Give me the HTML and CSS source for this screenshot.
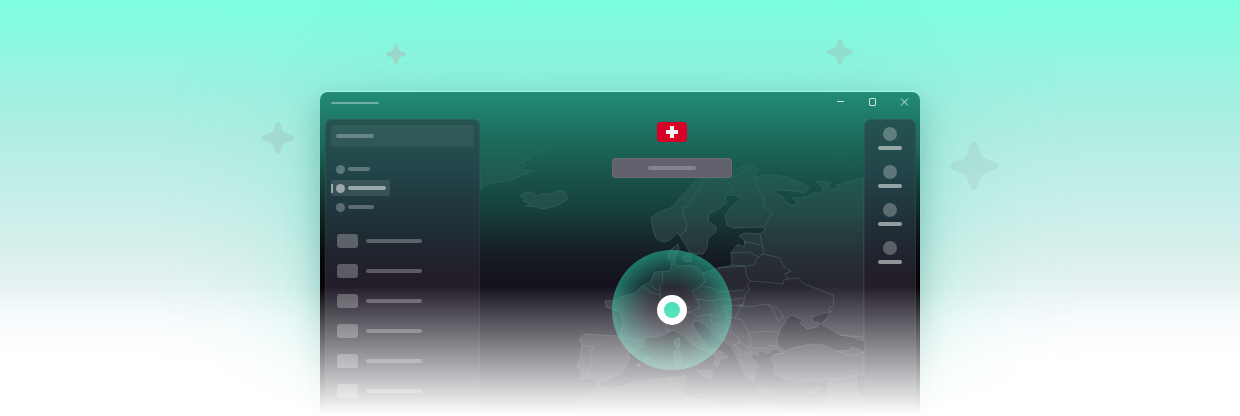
FILE: index.html
```html
<!DOCTYPE html>
<html lang="en">
<head>
<meta charset="utf-8">
<meta name="viewport" content="width=device-width, initial-scale=1">
<title>App window</title>
<link rel="stylesheet" href="styles.css">
</head>
<body>
<svg class="defs" width="0" height="0" aria-hidden="true">
  <symbol id="star" viewBox="0 0 48 48">
    <path d="M24 0C26.5 0 27.5 2 28.4 4.8C30.4 11 31.4 14 33.4 15.4C35.5 17 38.5 17.8 43.2 19.6C46 20.6 48 21.6 48 24C48 26.4 46 27.4 43.2 28.4C38.5 30.2 35.5 31 33.4 32.6C31.4 34 30.4 37 28.4 43.2C27.5 46 26.5 48 24 48C21.5 48 20.5 46 19.6 43.2C17.6 37 16.6 34 14.6 32.6C12.5 31 9.5 30.2 4.8 28.4C2 27.4 0 26.4 0 24C0 21.6 2 20.6 4.8 19.6C9.5 17.8 12.5 17 14.6 15.4C16.6 14 17.6 11 19.6 4.8C20.5 2 21.5 0 24 0Z"/>
  </symbol>
</svg>
<main class="hero">
  <div class="stars" aria-hidden="true">
    <svg class="star star-a"><use href="#star"/></svg>
    <svg class="star star-b"><use href="#star"/></svg>
    <svg class="star star-c"><use href="#star"/></svg>
    <svg class="star star-d"><use href="#star"/></svg>
  </div>

  <section class="window">
    <svg class="map" viewBox="320 92 600 324" preserveAspectRatio="xMidYMin slice" aria-hidden="true">
      <defs>
        <linearGradient id="land" gradientUnits="userSpaceOnUse" x1="0" y1="130" x2="0" y2="410">
          <stop offset="0" stop-color="#3f8a78" stop-opacity="0"/>
          <stop offset=".2" stop-color="#5d8a80" stop-opacity=".14"/>
          <stop offset=".4" stop-color="#7f9a96" stop-opacity=".16"/>
          <stop offset="1" stop-color="#a59aa8" stop-opacity=".16"/>
        </linearGradient>
        <linearGradient id="edge" gradientUnits="userSpaceOnUse" x1="0" y1="130" x2="0" y2="410">
          <stop offset="0" stop-color="#6fd0b8" stop-opacity="0"/>
          <stop offset=".4" stop-color="#7fd0be" stop-opacity=".2"/>
          <stop offset="1" stop-color="#8fb8b0" stop-opacity=".18"/>
        </linearGradient>
      </defs>
      <g fill="url(#land)" stroke="url(#edge)" stroke-width="1" stroke-linejoin="round">
        <path d="M480 190L484 186L490 183L508 181L516 178L523 175L535 171L533 170L517 170L527 165L523 162L532 158L530 155L545 150L548 146L553 140L552 130L480 130Z"/>
        <path d="M520 196L525 192L532 192L537 196L545 193L551 194L557 191L564 191L568 199L560 204L552 207L543 209L535 207L526 206L530 204L523 201L527 199Z"/>
        <path d="M651 218L660 212L672 207L680 198L690 187L698 178L710 178L727 177L730 172L740 167L750 165L759 169L755 173L757 177L767 174L787 177L803 183L809 188L805 193L783 190L773 191L783 197L787 203L795 206L797 202L792 198L807 197L813 193L822 192L822 187L816 181L827 182L831 183L828 188L837 189L837 185L853 180L864 178L864 341L852 337L840 335L827 327L821 324L827 318L830 312L823 313L812 317L813 322L820 323L817 327L807 329L800 323L803 320L792 315L788 317L785 323L780 330L777 340L778 347L785 351L793 348L810 344L823 345L837 351L848 350L852 347L864 352L864 375L857 375L843 379L828 379L817 383L810 380L797 383L782 378L773 373L775 366L771 359L775 354L784 353L778 350L771 349L770 353L760 351L757 355L751 353L752 358L759 366L753 370L756 375L753 382L747 378L743 370L737 358L733 348L726 343L716 336L703 323L695 320L693 325L700 337L710 347L722 352L728 357L721 359L717 367L713 364L717 358L710 353L693 345L683 335L673 330L660 336L645 338L643 347L628 354L630 360L622 373L608 379L598 383L592 378L580 379L582 370L577 367L580 357L582 345L579 339L585 334L620 336L623 322L620 312L606 307L605 301L618 300L620 297L635 293L642 286L650 282L655 272L670 271L672 262L668 259L668 252L678 244L679 249L675 257L675 263L677 266L690 265L698 267L703 273L718 268L732 265L731 253L738 244L744 247L745 241L739 236L744 233L760 234L765 230L763 227L733 228L727 225L725 216L730 208L742 198L734 195L725 196L727 203L717 210L709 214L708 221L716 227L716 232L708 238L707 248L703 254L690 254L687 247L680 236L677 233L670 240L663 242L656 238L653 230Z"/>
        <path d="M577 401L593 390L598 385L610 390L633 382L653 379L680 377L686 375L685 383L680 391L688 397L707 400L730 410L760 402L790 410L820 410L828 396L828 380L843 379L857 375L857 393L864 398L864 420L577 420Z"/>
        <path d="M674 341L679 337L680 346L677 349ZM673 352L680 350L682 363L676 365ZM697 371L713 370L711 379L703 376ZM758 387L768 390L774 389L772 393L761 392ZM807 392L813 389L820 387L816 393L810 393ZM682 258L687 254L692 258L690 262L684 261ZM636 365L640 364L639 367ZM644 358L651 358L647 361Z"/>
      </g>
      <g fill="none" stroke="url(#edge)" stroke-width="1" stroke-linejoin="round">
        <path d="M705 178L702 185L697 192L690 202L689 206L683 207L683 214L687 223L686 230L680 236M722 177L731 185L733 195M740 171L748 170L755 179L757 188L764 198L763 205L772 214L764 227M742 172L730 180M760 234L762 244L764 254L780 258L783 266L791 271L785 274L788 279L798 278L804 284L820 290L833 295L834 305L828 309L832 312"/>
        <path d="M744 242L753 243L761 245M731 253L750 252L758 257L764 254M758 257L754 265L745 266L732 265M745 266L747 277L750 281L747 285L750 289L745 295L743 305L738 306M750 281L765 282L783 284L784 280L788 279M738 306L749 307L767 304L777 308L784 317L778 321L776 317L773 309L767 304M743 305L738 312L735 318L742 320L748 330L749 333L770 331L780 333M748 333L751 341L750 347L760 349L767 348L770 345L778 347M735 318L728 317L723 307L736 305L743 305M732 348L736 344L740 342L738 337L731 332L731 322L725 318M739 342L748 347L751 352L740 355L738 348L733 344M718 268L745 266M703 273L705 281L701 286L713 288L718 292L732 291L745 290M701 286L692 291L697 299L713 301L723 299L732 300L743 298M697 299L700 307L690 312L697 317L710 314L717 317L724 309M710 314L712 323L725 326L731 335M712 301L718 309M662 272L663 281L660 285L660 298L670 306L665 312L667 321L666 330L671 331M641 286L652 293L660 295M650 285L657 290M665 312L680 311L690 312M670 306L684 304L690 308M667 321L677 317L690 312M620 337L643 341M582 345L593 347L590 353L592 362L588 376M618 390L621 410M670 379L676 400L682 408M837 351L852 356L864 352M840 335L864 337"/>
        <path d="M852 144L842 152L839 160L848 167L862 170"/>
      </g>
    </svg>

    <header class="titlebar">
      <span class="line title"></span>
      <div class="controls">
        <button type="button" aria-label="Minimize"><svg viewBox="0 0 9 9"><path d="M1 3.5H8"/></svg></button>
        <button type="button" aria-label="Maximize"><svg viewBox="0 0 9 9"><rect x="1.5" y=".5" width="6" height="7" rx=".5"/></svg></button>
        <button type="button" aria-label="Close"><svg viewBox="0 0 9 9"><path d="M1 .5L8 7.5M8 .5L1 7.5"/></svg></button>
      </div>
    </header>

    <div class="content">
      <aside class="panel sidebar">
        <div class="search"><span class="line"></span></div>
        <ul class="tabs">
          <li><i class="dot"></i><span class="line short"></span></li>
          <li class="active"><i class="dot"></i><span class="line long"></span></li>
          <li><i class="dot"></i><span class="line"></span></li>
        </ul>
        <ul class="countries">
          <li><i></i><span class="line"></span></li>
          <li><i></i><span class="line"></span></li>
          <li><i></i><span class="line"></span></li>
          <li><i></i><span class="line"></span></li>
          <li><i></i><span class="line"></span></li>
          <li><i></i><span class="line"></span></li>
        </ul>
      </aside>

      <div class="center">
        <svg class="flag" viewBox="0 0 30 20" role="img" aria-label="Switzerland"><rect width="30" height="20" rx="4" fill="#d80027"/><path d="M13 4H17V8H21V12H17V16H13V12H9V8H13Z" fill="#f4f0f2"/></svg>
        <div class="status"><span class="line"></span></div>
        <div class="pulse"><span class="pin"></span></div>
      </div>

      <aside class="panel rail">
        <ul>
          <li><i></i><span class="line"></span></li>
          <li><i></i><span class="line"></span></li>
          <li><i></i><span class="line"></span></li>
          <li><i></i><span class="line"></span></li>
        </ul>
      </aside>
    </div>
  </section>
  <div class="fade"></div>
</main>
</body>
</html>
```

FILE: styles.css
```css
* {
  box-sizing: border-box;
}

body {
  margin: 0;
  font-family: Inter, "Liberation Sans", sans-serif;
}

ul {
  list-style: none;
  margin: 0;
  padding: 0;
}

.defs {
  position: absolute;
}

.hero {
  position: relative;
  display: flex;
  justify-content: center;
  height: 100vh;
  min-height: 416px;
  padding-top: 92px;
  overflow: hidden;
  background: linear-gradient(#7effe0 0, #8cf9e1 40px, #9ff1e1 90px, #b3ede3 140px, #c6eeea 200px, #d6efeb 245px, #e6f3f3 285px, #f6fafc 325px, #fff 365px);
}

.star {
  position: absolute;
  fill: rgba(140, 140, 140, 0.13);
}

.star-a {
  top: 122px;
  left: calc(50% - 358px);
  width: 32px;
  height: 32px;
  fill: rgba(150, 145, 140, 0.2);
}

.star-b {
  top: 44px;
  left: calc(50% - 234px);
  width: 20px;
  height: 20px;
  fill: rgba(190, 170, 170, 0.42);
}

.star-c {
  top: 39px;
  left: calc(50% + 207px);
  width: 26px;
  height: 26px;
  fill: rgba(175, 165, 160, 0.3);
}

.star-d {
  top: 142px;
  left: calc(50% + 330px);
  width: 48px;
  height: 48px;
}

.window {
  position: relative;
  display: flex;
  flex-direction: column;
  width: 100%;
  max-width: 600px;
  border-radius: 8px 8px 0 0;
  background: linear-gradient(#228c75 0, #1c705f 40px, #185347 85px, #173f3a 120px, #16292c 145px, #151a21 168px, #15111d 190px);
  box-shadow: 0 -1px 1px rgba(190, 255, 240, 0.7), 0 12px 32px rgba(10, 90, 75, 0.3), 0 0 140px rgba(60, 225, 185, 0.36);
}

.window::before {
  content: "";
  position: absolute;
  inset: 0;
  border-radius: inherit;
  background: linear-gradient(90deg, rgba(0, 0, 0, 0.8), transparent 5%, transparent 95%, rgba(0, 0, 0, 0.8));
  mask-image: linear-gradient(transparent 60px, #000 190px);
}

.map {
  position: absolute;
  inset: 0;
  width: 100%;
  height: 100%;
}

.line {
  display: block;
  flex: none;
  height: 4px;
  border-radius: 2px;
  background: rgba(255, 255, 255, 0.27);
}

.titlebar {
  position: relative;
  display: flex;
  align-items: flex-start;
  justify-content: space-between;
  height: 27px;
  padding-left: 11px;
}

.title {
  width: 48px;
  height: 2px;
  margin-top: 10px;
  background: rgba(255, 255, 255, 0.35);
}

.controls {
  display: flex;
}

.controls button {
  display: grid;
  place-items: center;
  width: 32px;
  height: 21px;
  padding: 0;
  border: 0;
  background: none;
}

.controls svg {
  width: 9px;
  height: 9px;
  fill: none;
  stroke: #c9e6df;
}

.content {
  position: relative;
  display: flex;
  flex: 1;
  min-height: 0;
  padding: 0 4px 0 5px;
}

.panel {
  flex: none;
  border: 1px solid rgba(255, 255, 255, 0.05);
  border-bottom: 0;
  border-radius: 7px 7px 0 0;
  background: linear-gradient(#25544f 0, #22464a 50px, #20343b 95px, #20262f 130px, #221d29 160px) border-box;
}

.sidebar {
  width: 155px;
  padding: 5px 5px 0;
}

.search {
  display: flex;
  align-items: center;
  height: 22px;
  padding-left: 5px;
  border-radius: 2px;
  background: rgba(255, 255, 255, 0.06);
}

.search .line {
  width: 38px;
}

.tabs {
  display: grid;
  justify-items: start;
  gap: 3px;
  margin-top: 14px;
}

.tabs li {
  display: flex;
  align-items: center;
  gap: 3px;
  height: 16px;
  padding: 0 4px 0 5px;
}

.tabs .line {
  width: 26px;
}

.tabs .short {
  width: 22px;
}

.tabs .long {
  width: 38px;
}

.dot {
  width: 9px;
  height: 9px;
  border-radius: 50%;
  background: rgba(255, 255, 255, 0.27);
}

.tabs .active {
  position: relative;
  border-radius: 2px;
  background: rgba(255, 255, 255, 0.1);
}

.active::before {
  content: "";
  position: absolute;
  left: 0;
  top: 4px;
  width: 2px;
  height: 9px;
  background: rgba(255, 255, 255, 0.5);
}

.active .dot,
.active .line {
  background: rgba(255, 255, 255, 0.5);
}

.countries {
  display: grid;
  gap: 16px;
  margin-top: 19px;
  padding-left: 6px;
}

.countries li {
  display: flex;
  align-items: center;
  gap: 8px;
}

.countries i {
  width: 21px;
  height: 14px;
  border-radius: 3px;
  background: rgba(255, 255, 255, 0.27);
}

.countries .line {
  width: 56px;
}

.center {
  display: flex;
  flex: 1;
  flex-direction: column;
  align-items: center;
  padding-top: 3px;
}

.flag {
  flex: none;
  width: 30px;
  height: 20px;
}

.status {
  display: grid;
  flex: none;
  place-items: center;
  width: 120px;
  height: 20px;
  margin-top: 16px;
  border: 1px solid #6c6976;
  border-radius: 3px;
  background: #63606e;
}

.status .line {
  width: 48px;
  background: #858290;
}

.pulse {
  display: grid;
  flex: none;
  place-items: center;
  width: 120px;
  height: 120px;
  margin-top: 72px;
  border-radius: 50%;
  background: radial-gradient(closest-side, transparent 35%, rgba(40, 180, 148, 0.28) 68%, rgba(40, 180, 148, 0.62));
}

.pin {
  width: 30px;
  height: 30px;
  border: 7px solid #fff;
  border-radius: 50%;
  background: #29dcac;
}

.rail {
  width: 52px;
  padding-top: 7px;
}

.rail ul {
  display: grid;
  gap: 15px;
}

.rail li {
  display: grid;
  justify-items: center;
  gap: 5px;
}

.rail i {
  width: 14px;
  height: 14px;
  border-radius: 50%;
  background: rgba(255, 255, 255, 0.27);
}

.rail .line {
  width: 24px;
  background: rgba(255, 255, 255, 0.52);
}

.fade {
  position: absolute;
  inset: 286px 0 0;
  background: linear-gradient(rgba(255, 255, 255, 0), #fff 129px);
  pointer-events: none;
}
```
